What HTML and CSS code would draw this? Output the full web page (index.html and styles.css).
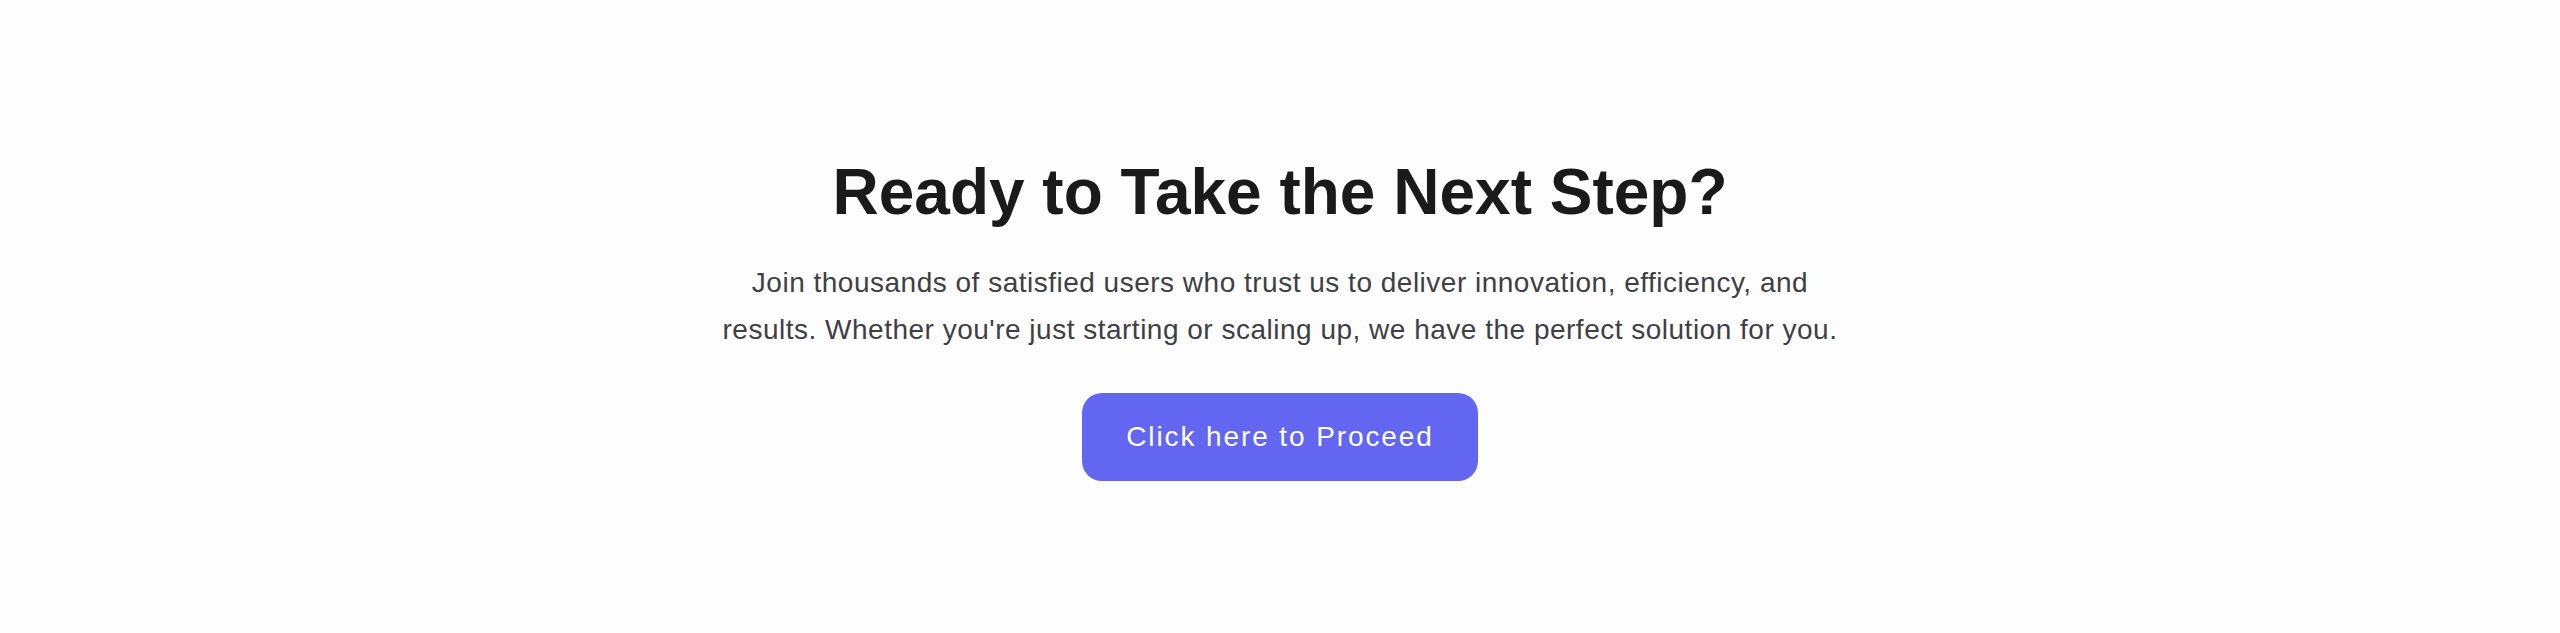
FILE: index.html
```html
<!DOCTYPE html>
<html>
    <head>
        <meta charset="utf-8">
        <meta name="viewport" content="width=device-width, initial-scale=1.0">
        <title>Next Step</title>
        <link rel="stylesheet" href="styles.css">
    </head>
    <body>
        <section class="cta">
            <h2 class="cta-title">Ready to Take the Next Step?</h2>
            <p class="cta-text">Join thousands of satisfied users who trust us to deliver innovation, efficiency, and results. Whether you're just starting or scaling up, we have the perfect solution for you.</p>
            <a class="cta-btn" href="#">Click here to Proceed</a>
        </section>
    </body>
</html>
```

FILE: styles.css
```css
body{
    margin: 0;
    background: #fdfdfd;
    font-family: "Liberation Sans", Arial, sans-serif;
}
.cta{
    display: flex;
    flex-direction: column;
    align-items: center;
    text-align: center;
    padding: 154px 20px 0;
    height: 633px;
    box-sizing: border-box;
}
.cta-title{
    margin: 0;
    font-size: 64px;
    line-height: 1.2;
    font-weight: 700;
    color: #1a1a1a;
}
.cta-text{
    margin: 28px 0 0;
    max-width: 1130px;
    font-size: 28px;
    line-height: 47px;
    color: #3f3f46;
    letter-spacing: 0.5px;
}
.cta-btn{
    margin-top: 40px;
    display: inline-block;
    padding: 22px 44px;
    background: #6366f1;
    color: #ffffff;
    font-size: 28px;
    line-height: 44px;
    border-radius: 20px;
    text-decoration: none;
    font-weight: 500;
    letter-spacing: 1.9px;
}
```
